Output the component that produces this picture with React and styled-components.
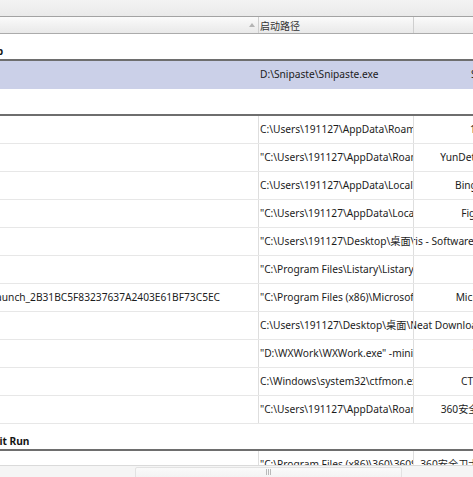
import React, { useLayoutEffect, useRef } from "react";
import styled, { createGlobalStyle } from "styled-components";

// the list is scrolled sideways, so the name column is mostly off to the left
const SCROLL_X = 210;
const NAME_W = SCROLL_X + 259;
const PATH_W = 155;
const DESC_W = 154;
const SHEET_W = NAME_W + PATH_W + DESC_W;
const COLS = `${NAME_W}px ${PATH_W}px ${DESC_W}px`;
const NAME_PAD = 109;
const GROUP_PAD = 61;

const TRACK_START = 17;
const TRACK_W = 439;

const groups = [
  {
    title: "Start Menu\\Programs\\Startup",
    items: [
      {
        name: "Snipaste",
        path: "D:\\Snipaste\\Snipaste.exe",
        desc: "Snipaste",
        selected: true,
      },
    ],
  },
  {
    title: "HKCU Run",
    items: [
      {
        name: "1Remote",
        path: "C:\\Users\\191127\\AppData\\Roaming\\1Remote\\1Remote.exe",
        desc: "1Remote",
      },
      {
        name: "YunDetectService",
        path: '"C:\\Users\\191127\\AppData\\Roaming\\baidu\\BaiduNetdisk\\YunDetectService.exe"',
        desc: "YunDetectService.exe",
      },
      {
        name: "BingWallpaperApp",
        path: "C:\\Users\\191127\\AppData\\Local\\Microsoft\\BingWallpaperApp\\BingWallpaperApp.exe",
        desc: "Bing Wallpaper",
      },
      {
        name: "Figma Agent",
        path: '"C:\\Users\\191127\\AppData\\Local\\FigmaAgent\\figma_agent.exe"',
        desc: "Figma Agent",
      },
      {
        name: "Iris",
        path: '"C:\\Users\\191127\\Desktop\\桌面\\Iris\\Iris.exe"',
        desc: "Iris - Software for eye protection v1",
      },
      {
        name: "Listary",
        path: '"C:\\Program Files\\Listary\\Listary.exe"',
        desc: "Listary",
      },
      {
        name: "MicrosoftEdgeAutoLaunch_2B31BC5F83237637A2403E61BF73C5EC",
        path: '"C:\\Program Files (x86)\\Microsoft\\Edge\\Application\\msedge.exe" --no-startup-window',
        desc: "Microsoft Edge",
      },
      {
        name: "NeatDM",
        path: "C:\\Users\\191127\\Desktop\\桌面\\NDM\\NeatDM.exe",
        desc: "Neat Download Manager Program",
      },
      {
        name: "WXWork",
        path: '"D:\\WXWork\\WXWork.exe" -minimized',
        desc: "WeCom",
      },
      {
        name: "ctfmon",
        path: "C:\\Windows\\system32\\ctfmon.exe",
        desc: "CTF 加载程序",
      },
      {
        name: "360Safetray",
        path: '"C:\\Users\\191127\\AppData\\Roaming\\360safe\\safemon\\360tray.exe" /start',
        desc: "360安全卫士 安全防护",
      },
    ],
  },
  {
    title: "HKLM\\Winlogon\\Shell\\Userinit Run",
    items: [
      {
        name: "360Safe",
        path: '"C:\\Program Files (x86)\\360\\360Safe\\safemon\\360tray.exe" /start',
        desc: "360安全卫士 安全防护中心模块",
      },
    ],
  },
];

const App = () => {
  const viewRef = useRef(null);

  useLayoutEffect(() => {
    if (viewRef.current) viewRef.current.scrollLeft = SCROLL_X;
  }, []);

  const thumbW = (TRACK_W * 473) / SHEET_W;
  const thumbX = TRACK_START + (TRACK_W * SCROLL_X) / SHEET_W;

  return (
    <Page>
      <GlobalStyle />
      <TopBar />
      <Viewport ref={viewRef}>
        <Sheet>
          <HeaderRow>
            <HeaderCell $align="space-between">
              <span>名称</span>
              <SortArrow width="6" height="4" viewBox="0 0 6 4">
                <polygon points="0,4 3,0 6,4" fill="#b4b4b4" />
              </SortArrow>
            </HeaderCell>
            <HeaderCell>启动路径</HeaderCell>
            <HeaderCell $align="center" $last>
              描述
            </HeaderCell>
          </HeaderRow>

          {groups.map((group) => (
            <React.Fragment key={group.title}>
              <GroupRow>{group.title}</GroupRow>
              {group.items.map((item) => (
                <ItemRow key={item.name} $selected={item.selected}>
                  <Cell $selected={item.selected} $pad={NAME_PAD}>
                    {item.name}
                  </Cell>
                  <Cell $selected={item.selected}>{item.path}</Cell>
                  <Cell $selected={item.selected} $center $last>
                    {item.desc}
                  </Cell>
                </ItemRow>
              ))}
            </React.Fragment>
          ))}
        </Sheet>
      </Viewport>
      <HScrollBar>
        <Thumb style={{ marginLeft: thumbX, width: thumbW }}>
          <Grip />
          <Grip />
          <Grip />
        </Thumb>
      </HScrollBar>
    </Page>
  );
};

const GlobalStyle = createGlobalStyle`
  html, body {
    margin: 0;
    padding: 0;
    background: #fff;
    overflow: hidden;
  }
  body {
    font-family: "Noto Sans", "Open Sans", "Noto Sans CJK SC", sans-serif;
    font-size: 10.2px;
    color: #1c1c1c;
  }
`;

const Page = styled.div`
  height: 100vh;
  display: flex;
  flex-direction: column;
  overflow: hidden;
`;

const TopBar = styled.div`
  flex-shrink: 0;
  height: 16px;
  background: linear-gradient(#f3f3f3, #eaeaea);
  border-bottom: 1px solid #a3a3a3;
`;

const Viewport = styled.div`
  flex-shrink: 0;
  height: 448px;
  overflow: hidden;
`;

const Sheet = styled.div`
  width: ${SHEET_W}px;
  display: flex;
  flex-direction: column;
`;

const HeaderRow = styled.div`
  display: grid;
  grid-template-columns: ${COLS};
  height: 16px;
  border-bottom: 1px solid #ababab;
  background: linear-gradient(#fbfbfb 0%, #f3f3f3 40%, #e9e9e9 100%);
`;

const HeaderCell = styled.div`
  display: flex;
  align-items: center;
  justify-content: ${(p) => p.$align || "flex-start"};
  padding: 0 3px 0 1px;
  border-right: ${(p) => (p.$last ? "none" : "1px solid #cfcfcf")};
  font-family: "Noto Sans CJK SC", "Noto Sans", sans-serif;
  font-size: 10px;
  color: #333;
  white-space: nowrap;
  overflow: hidden;
`;

const SortArrow = styled.svg`
  display: block;
  margin-top: -1px;
`;

const GroupRow = styled.div`
  display: flex;
  align-items: flex-end;
  height: 24px;
  padding: 0 0 1px ${GROUP_PAD}px;
  border-bottom: 2px solid #6e6e6e;
  font-weight: 700;
  line-height: 14px;
  color: #151515;
  white-space: nowrap;
`;

const ItemRow = styled.div`
  display: grid;
  grid-template-columns: ${COLS};
  height: 28px;
  box-sizing: border-box;
  border-bottom: 1px solid ${(p) => (p.$selected ? "#cbd0e8" : "#e7e7e7")};
  background: ${(p) => (p.$selected ? "#cbd0e8" : "#fff")};
`;

const Cell = styled.div`
  padding: 0 0 0 ${(p) => (p.$pad != null ? p.$pad : 1)}px;
  line-height: 27px;
  text-align: ${(p) => (p.$center ? "center" : "left")};
  white-space: nowrap;
  overflow: hidden;
  display: ${(p) => (p.$center ? "flex" : "block")};
  justify-content: center;
  border-right: ${(p) =>
    p.$last ? "none" : `1px solid ${p.$selected ? "transparent" : "#dedede"}`};
  font-family: "Noto Sans", "Noto Sans CJK SC", sans-serif;
`;

const HScrollBar = styled.div`
  flex-shrink: 0;
  height: 17px;
  box-sizing: border-box;
  display: flex;
  align-items: stretch;
  padding: 1px 0 1px;
  background: #f5f5f5;
  border-top: 1px solid #dadada;
`;

const Thumb = styled.div`
  display: flex;
  align-items: center;
  justify-content: center;
  gap: 1px;
  box-sizing: border-box;
  border: 1px solid #e2e2e2;
  border-radius: 2px;
  background: linear-gradient(#fafafa, #f1f1f1);
`;

const Grip = styled.div`
  width: 1px;
  height: 6px;
  background: #b9b9b9;
  margin-top: -4px;
`;

export default App;
